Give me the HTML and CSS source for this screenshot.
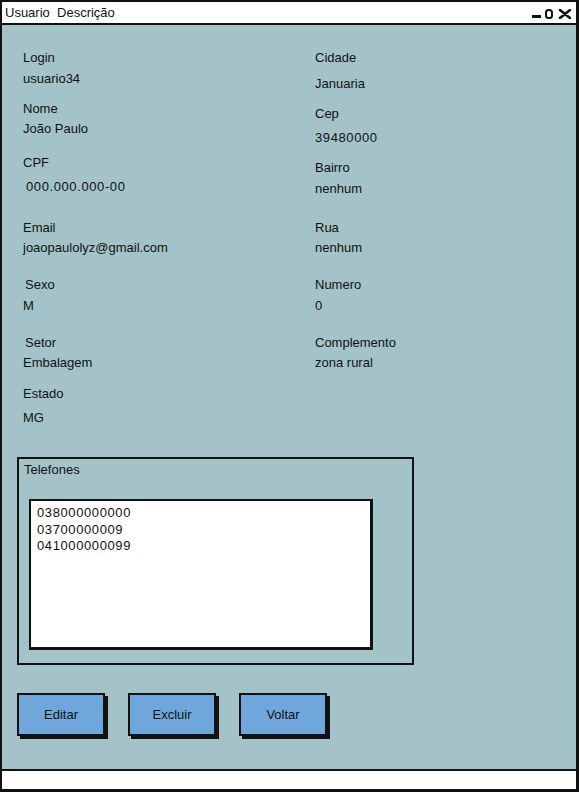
FILE: index.html
```html
<!DOCTYPE html>
<html lang="pt">
<head>
<meta charset="utf-8">
<title>Usuario Descrição</title>
<link rel="stylesheet" href="styles.css">
</head>
<body>
<div class="window">
  <div class="titlebar">
    <span class="title">Usuario&nbsp; Descrição</span>
    <svg class="controls" width="39" height="10" viewBox="0 0 39 10" aria-hidden="true">
      <rect x="0" y="6" width="9" height="3" fill="#111"/>
      <rect x="14" y="1" width="6" height="8" rx="2.5" fill="none" stroke="#111" stroke-width="2"/>
      <path d="M28 1 L38 9 M38 1 L28 9" stroke="#111" stroke-width="2.6" stroke-linecap="round"/>
    </svg>
  </div>
  <div class="content">
    <div class="fields">
      <div class="col">
        <div class="field f-login"><span class="label">Login</span><span class="value">usuario34</span></div>
        <div class="field f-nome"><span class="label">Nome</span><span class="value">João Paulo</span></div>
        <div class="field f-cpf"><span class="label">CPF</span><span class="value num shift">000.000.000-00</span></div>
        <div class="field f-email"><span class="label">Email</span><span class="value">joaopaulolyz@gmail.com</span></div>
        <div class="field f-sexo"><span class="label shift-s">Sexo</span><span class="value">M</span></div>
        <div class="field f-setor"><span class="label shift-s">Setor</span><span class="value">Embalagem</span></div>
        <div class="field f-estado"><span class="label">Estado</span><span class="value">MG</span></div>
      </div>
      <div class="col">
        <div class="field f-cidade"><span class="label">Cidade</span><span class="value">Januaria</span></div>
        <div class="field f-cep"><span class="label">Cep</span><span class="value num">39480000</span></div>
        <div class="field f-bairro"><span class="label">Bairro</span><span class="value">nenhum</span></div>
        <div class="field f-rua"><span class="label">Rua</span><span class="value">nenhum</span></div>
        <div class="field f-numero"><span class="label">Numero</span><span class="value">0</span></div>
        <div class="field f-compl"><span class="label">Complemento</span><span class="value">zona rural</span></div>
      </div>
    </div>
    <section class="phones">
      <div class="phones-label">Telefones</div>
      <div class="phone-list">
        <div>038000000000</div>
        <div>03700000009</div>
        <div>041000000099</div>
      </div>
    </section>
    <div class="actions">
      <button class="btn" type="button">Editar</button>
      <button class="btn" type="button">Excluir</button>
      <button class="btn" type="button">Voltar</button>
    </div>
  </div>
  <div class="statusbar"></div>
</div>
</body>
</html>
```
FILE: styles.css
```css
* { box-sizing: border-box; }
html, body { margin: 0; padding: 0; background: #ffffff; }
body {
  font-family: "Liberation Sans", Arial, sans-serif;
  font-size: 13px;
  color: #111;
}
.window {
  width: 579px;
  height: 792px;
  border: 2px solid #111;
  border-right-width: 3px;
  border-bottom-width: 3px;
  display: flex;
  flex-direction: column;
  background: #fff;
}
.titlebar {
  height: 23px;
  border-bottom: 2px solid #111;
  display: flex;
  align-items: flex-start;
  justify-content: space-between;
  background: #fff;
}
.title {
  line-height: 21px;
  padding-left: 3px;
}
.controls {
  margin-top: 7px;
  margin-right: 5px;
}
.content {
  flex: 1;
  background: #a3c3c8;
  padding: 25px 0 0 15px;
}
.fields {
  display: grid;
  grid-template-columns: 292px 1fr;
  padding-left: 6px;
}
.col {
  display: flex;
  flex-direction: column;
}
.field {
  display: flex;
  flex-direction: column;
  line-height: 16px;
}
.num { letter-spacing: 0.6px; }
.shift { padding-left: 3px; }
.shift-s { padding-left: 2px; }

.f-login  { gap: 5px; }
.f-nome   { gap: 4px; margin-top: 14px; }
.f-cpf    { gap: 8px; margin-top: 18px; }
.f-email  { gap: 4px; margin-top: 25px; }
.f-sexo   { gap: 5px; margin-top: 21px; }
.f-setor  { gap: 4px; margin-top: 21px; }
.f-estado { gap: 8px; margin-top: 15px; }

.f-cidade { gap: 10px; }
.f-cep    { gap: 8px; margin-top: 14px; }
.f-bairro { gap: 5px; margin-top: 14px; }
.f-rua    { gap: 4px; margin-top: 23px; }
.f-numero { gap: 5px; margin-top: 21px; }
.f-compl  { gap: 4px; margin-top: 21px; }

.phones {
  margin-top: 31px;
  width: 397px;
  height: 208px;
  border: 2px solid #111;
  padding: 3px 0 0 5px;
}
.phones-label {
  line-height: 16px;
}
.phone-list {
  margin: 21px 0 0 5px;
  width: 344px;
  height: 151px;
  background: #fff;
  border: 2px solid #111;
  border-right-width: 3px;
  border-bottom-width: 3px;
  padding: 4px 0 0 6px;
  line-height: 16.5px;
  letter-spacing: 0.6px;
}
.actions {
  margin-top: 28px;
  display: flex;
  gap: 23px;
}
.btn {
  width: 88px;
  height: 43px;
  border: 2px solid #111;
  background: #6fa7dc;
  box-shadow: 3px 3px 0 #111;
  font-family: inherit;
  font-size: 13px;
  color: #111;
  padding: 0;
  margin: 0;
}
.statusbar {
  height: 20px;
  border-top: 2px solid #111;
  background: #fff;
}
```
